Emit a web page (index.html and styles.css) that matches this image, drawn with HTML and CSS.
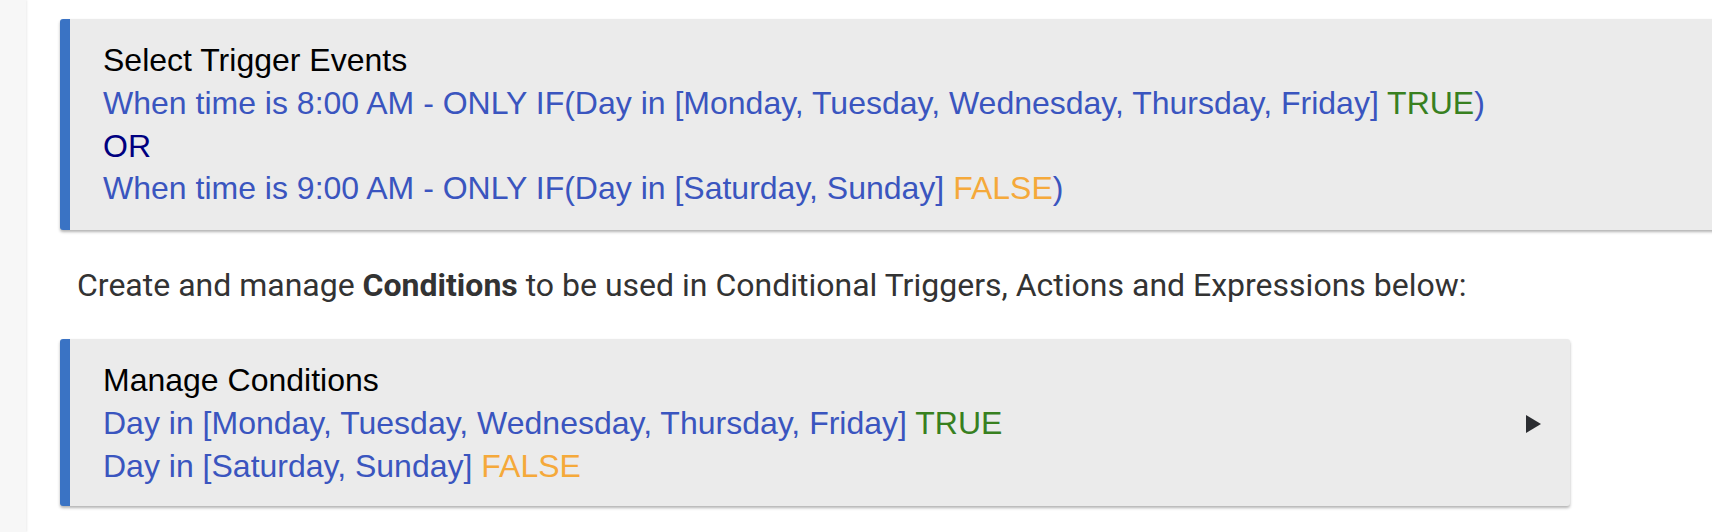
FILE: index.html
```html
<!DOCTYPE html>
<html>
<head>
<meta charset="utf-8">
<link rel="stylesheet" href="styles.css">
</head>
<body>
<div class="page">
  <div class="sidebar"></div>
  <div class="main">
    <div class="card card-wide">
      <div class="card-body">
        <div class="title">Select Trigger Events</div>
        <div class="val">When time is 8:00 AM - ONLY IF(Day in [Monday, Tuesday, Wednesday, Thursday, Friday] <span class="true">TRUE</span>)</div>
        <div class="or">OR</div>
        <div class="val">When time is 9:00 AM - ONLY IF(Day in [Saturday, Sunday] <span class="false">FALSE</span>)</div>
      </div>
    </div>
    <p class="note">Create and manage <b>Conditions</b> to be used in Conditional Triggers, Actions and Expressions below:</p>
    <div class="card card-narrow">
      <div class="card-body">
        <div class="title">Manage Conditions</div>
        <div class="val">Day in [Monday, Tuesday, Wednesday, Thursday, Friday] <span class="true">TRUE</span></div>
        <div class="val">Day in [Saturday, Sunday] <span class="false">FALSE</span></div>
      </div>
      <svg class="arrow" width="15" height="18" viewBox="0 0 15 18"><path d="M0 0 L15 9 L0 18 Z" fill="#2b2d31"/></svg>
    </div>
  </div>
</div>
</body>
</html>
```
FILE: styles.css
```css
html, body {
  margin: 0;
  padding: 0;
  background: #fff;
  overflow: hidden;
}
.page {
  display: flex;
  width: 1712px;
  height: 532px;
}
.sidebar {
  width: 26px;
  flex: none;
  background: #f7f7f7;
  box-shadow: 1px 0 2px rgba(0,0,0,0.08);
}
.main {
  flex: 1;
  padding: 19px 0 0 34px;
  min-width: 0;
}
.card {
  display: flex;
  align-items: center;
  background: #ebebeb;
  border-left: 10px solid #3a73c4;
  border-radius: 3px;
  box-shadow: 0 2px 3px rgba(0,0,0,0.3);
  padding: 20px 29px 20px 33px;
  box-sizing: border-box;
}
.card-wide {
  width: 1720px;
}
.card-narrow {
  width: 1510px;
  padding-bottom: 18px;
}
.card-body {
  flex: 1;
  font-family: "Liberation Sans", Arial, sans-serif;
  font-size: 32px;
  line-height: 42.8px;
}
.title {
  color: #000;
}
.val {
  color: #3a55bf;
}
.or {
  color: #000080;
}
.true {
  color: #38801f;
}
.false {
  color: #f5a93a;
}
.note {
  margin: 34px 0 32px 17px;
  font-family: Roboto, sans-serif;
  font-size: 32px;
  line-height: 43px;
  color: #333;
}
.note b {
  font-weight: 700;
}
.arrow {
  flex: none;
  margin-top: 2px;
}
```
